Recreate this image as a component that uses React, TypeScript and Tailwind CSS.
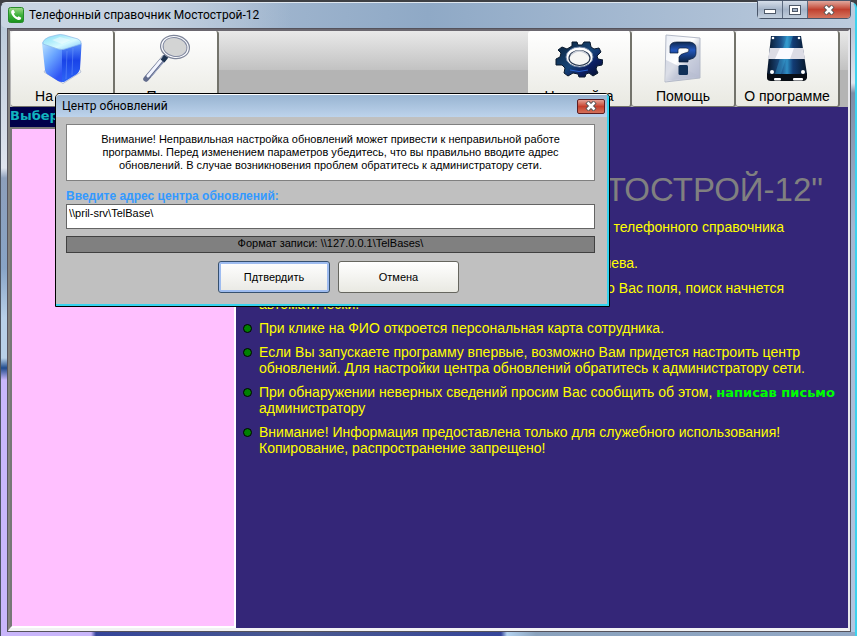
import type { ReactNode } from "react";

const sans = "font-['Liberation_Sans',Arial,sans-serif]";
const caption = "font-['Roboto','Segoe_UI',sans-serif]";

function PhoneLogo() {
  return (
    <svg viewBox="0 0 16 16" className="size-4" aria-hidden="true">
      <defs>
        <linearGradient id="phone" x2="0" y2="1">
          <stop stopColor="#a5dc8e" />
          <stop offset=".5" stopColor="#3fb13b" />
          <stop offset="1" stopColor="#18921c" />
        </linearGradient>
      </defs>
      <rect x=".5" y=".5" width="15" height="15" rx="2" fill="url(#phone)" stroke="#278c2b" />
      <path d="M4 3.2 5.5 2.8 7 5.5 5.8 6.7Q7 9.3 9.4 10.3L10.6 9.2 13.3 10.7 12.8 12.3Q11.6 13.5 9.5 12.7 4.7 10.9 3.2 6 2.8 4.2 4 3.2Z" fill="#fff" />
    </svg>
  );
}

function CubeIcon() {
  return (
    <svg viewBox="0 0 48 52" className="h-13 w-12" aria-hidden="true">
      <defs>
        <linearGradient id="cubeL" x2=".6" y2="1">
          <stop stopColor="#bfe6ff" />
          <stop offset=".5" stopColor="#6aa5ff" />
          <stop offset="1" stopColor="#2f55f5" />
        </linearGradient>
        <linearGradient id="cubeR" x2="0" y2="1">
          <stop stopColor="#5f97fb" />
          <stop offset=".45" stopColor="#1943e8" />
          <stop offset="1" stopColor="#2e66f6" />
        </linearGradient>
        <linearGradient id="cubeT" x2="1" y2="1">
          <stop stopColor="#7fdcf5" />
          <stop offset=".6" stopColor="#d6faff" />
          <stop offset="1" stopColor="#7ac6fa" />
        </linearGradient>
      </defs>
      <path d="M6 39 25 50.500 43 39 41 35 8 36Z" fill="#eef2fb" stroke="#b9c2d8" />
      <path d="M4 10Q4 8 7 9L24 15V49Q22 49 20 48L9 41Q7 39 7 37Z" fill="url(#cubeL)" />
      <path d="M24 15 41 10Q44 9 43.500 12L42 36Q41 39 39 41L26 49 24 49Z" fill="url(#cubeR)" />
      <path d="M5 9Q6 6 11 4L19 2Q22 1 26 2L40 6Q44 8 43 11L27 16Q24 17 20 16L5 11Z" fill="url(#cubeT)" stroke="#8cb8e8" strokeWidth=".7" />
      <path d="M14 7 22 4 33 7 24 11Z" fill="#fff" opacity=".45" />
      <path d="M29 18 28 46M35 15 34 42" stroke="#7fa9ff" strokeWidth="1" opacity=".4" />
    </svg>
  );
}

function MagnifierIcon() {
  return (
    <svg viewBox="0 0 50 52" className="h-13 w-[50px]" aria-hidden="true">
      <path d="M23 25 5 46" stroke="#626c8c" strokeWidth="5.500" strokeLinecap="round" />
      <path d="M22 25 7 43" stroke="#f2f5ff" strokeWidth="3" strokeLinecap="round" />
      <path d="M24 27 10 44" stroke="#9fa9c8" strokeWidth="1" />
      <path d="M25.500 23 21.500 28" stroke="#1d3350" strokeWidth="5" />
      <ellipse cx="34" cy="14" rx="14.500" ry="11.500" transform="rotate(10 34 14)" fill="#fbfcff" stroke="#7d8498" strokeWidth="1.200" />
      <ellipse cx="34" cy="14" rx="12" ry="9.500" transform="rotate(10 34 14)" fill="#d3d4d4" stroke="#8088a0" />
    </svg>
  );
}

function GearIcon() {
  return (
    <svg viewBox="0 0 48 52" className="h-13 w-12" aria-hidden="true">
      <defs>
        <linearGradient id="gear" x2="1" y2="1">
          <stop stopColor="#0a2036" />
          <stop offset=".5" stopColor="#174578" />
          <stop offset=".7" stopColor="#0c1f62" />
          <stop offset="1" stopColor="#050f24" />
        </linearGradient>
      </defs>
      <path d="M17 9H22L23 12H27L29 9H35L36 14 39 16 44 15 46 19 42 23 43 26 48 27 47 32 42 33 41 36 43 40 38 43 34 40 31 41 30 44H24L23 41 18 40 13 43 9 40 10 35 7 32 1 32V26L5 24 6 20 3 17 7 14 12 16 17 13Z" fill="url(#gear)" stroke="#09192d" strokeLinejoin="round" />
      <ellipse cx="24.500" cy="24" rx="13.500" ry="10" fill="#fff" stroke="#6e83a3" />
      <ellipse cx="24.500" cy="25" rx="10.500" ry="7.500" fill="#f6f6f4" stroke="#26364f" strokeWidth="1.200" />
      <path d="M16 22Q24 14 33 22" stroke="#c7ccd6" strokeWidth="1.500" fill="none" />
      <path d="M15 37Q24 40 33 37" stroke="#2761cf" strokeWidth="1" fill="none" />
    </svg>
  );
}

function HelpIcon() {
  return (
    <svg viewBox="0 0 40 52" className="h-13 w-10" aria-hidden="true">
      <defs>
        <linearGradient id="sheet" x2="1" y2="1">
          <stop stopColor="#e9edf5" />
          <stop offset=".45" stopColor="#fff" />
          <stop offset=".6" stopColor="#cbd0de" />
          <stop offset="1" stopColor="#b2b8cf" />
        </linearGradient>
        <linearGradient id="mark" x2="0" y2="1">
          <stop stopColor="#0d2850" />
          <stop offset=".4" stopColor="#2357bd" />
          <stop offset="1" stopColor="#0c2344" />
        </linearGradient>
      </defs>
      <path d="M3 2 37 5V45L2 49Z" fill="url(#sheet)" stroke="#b4bac8" />
      <path d="M3 27 36 43 3 48Z" fill="#b8bed0" opacity=".5" />
      <path d="M7 20V13Q8 9 14 9H27Q33 10 33 15V20Q33 25 28 26L25 27V29H16V24Q17 21 22 20 26 20 26 17 26 15 23 15H17Q15 15 15 17V20Z" fill="url(#mark)" stroke="#0a1d3e" strokeWidth=".7" />
      <rect x="15.500" y="32" width="9.500" height="10" rx="1.500" fill="#103058" />
    </svg>
  );
}

function DriveIcon() {
  return (
    <svg viewBox="0 0 44 52" className="h-13 w-11" aria-hidden="true">
      <defs>
        <linearGradient id="drive" x2="1">
          <stop stopColor="#061326" />
          <stop offset=".35" stopColor="#1e5189" />
          <stop offset=".5" stopColor="#2f8fc4" />
          <stop offset=".65" stopColor="#123c75" />
          <stop offset="1" stopColor="#081728" />
        </linearGradient>
      </defs>
      <path d="M2 40 42 40V45Q41 48 38 48H6Q2 48 2 45Z" fill="#080d14" />
      <path d="M6 3H36L42 41H2Z" fill="url(#drive)" />
      <path d="M22 3H28L16 41H10Z" fill="#43c0ed" opacity=".3" />
      <path d="M5 15H38L40 26H3Z" fill="#dcdce5" />
      <path d="M15 15H29L25 26H10Z" fill="#fafaff" />
      <g fill="#fff">
        <circle cx="8" cy="5" r="1.300" />
        <circle cx="34" cy="5" r="1.300" />
        <circle cx="7" cy="39" r="2" />
        <circle cx="38" cy="39" r="2" />
        <rect x="9" y="45" width="7" height="2.500" rx="1" />
        <rect x="28" y="45" width="10" height="2.500" rx="1" />
      </g>
    </svg>
  );
}

function CloseMark() {
  return (
    <svg viewBox="0 0 12 10" className="h-[10px] w-3" aria-hidden="true">
      <path d="M2 1 10 9M10 1 2 9" stroke="#555" strokeWidth="4.500" />
      <path d="M2.500 1.500 9.500 8.500M9.500 1.500 2.500 8.500" stroke="#fff" strokeWidth="2.500" />
    </svg>
  );
}

function ToolButton({ icon, label }: { icon: ReactNode; label: string }) {
  return (
    <button
      type="button"
      className="flex h-[76px] w-[104px] shrink-0 flex-col items-center rounded-[3px] border-r-2 border-b border-[#73736b] bg-gradient-to-b from-white via-[#f4f4f1] to-[#e9e9e2] pt-[2px] text-[14px] leading-4 text-black"
    >
      {icon}
      <span className="mt-[3px] whitespace-nowrap">{label}</span>
    </button>
  );
}

function Item({ children, className = "mb-2" }: { children: ReactNode; className?: string }) {
  return (
    <li className={`flex gap-[7px] ${className}`}>
      <span className="mt-1 size-[9px] shrink-0 rounded-full border border-black bg-[#008000]" />
      <div className="whitespace-nowrap">{children}</div>
    </li>
  );
}

function UpdateDialog() {
  return (
    <section
      role="dialog"
      aria-labelledby="dialog-title"
      className="absolute top-[93px] left-[55px] w-[555px] rounded-t-[5px] border border-black bg-[#c0c0c0] text-[11px] leading-[13px] text-black"
    >
      <div className="rounded-t-[4px] border-r-2 border-b-2 border-t border-r-[#35d3ee] border-b-[#35d3ee] border-t-white">
        <header className={`flex h-[22px] items-center justify-between rounded-tl-[4px] bg-gradient-to-b from-[#98b4d1] to-[#bdd3ec] pr-[2px] pl-[6px] text-[12px] ${caption}`}>
          <h2 id="dialog-title">Центр обновлений</h2>
          <button type="button" aria-label="Закрыть" className="flex h-[15px] w-7 items-center justify-center rounded-[2px] border border-[#5b1d22] bg-gradient-to-b from-[#e4a195] via-[#c5402c] to-[#d3705a]">
            <CloseMark />
          </button>
        </header>
        <form className="pt-[7px] pr-[12px] pb-[11px] pl-[10px]" onSubmit={(e) => e.preventDefault()}>
          <p className="flex h-[57px] items-center justify-center border border-[#808080] bg-white text-center">
            <span>
              Внимание! Неправильная настройка обновлений может привести к неправильной работе
              <br />
              программы. Перед изменением параметров убедитесь, что вы правильно вводите адрес
              <br />
              обновлений. В случае возникновения проблем обратитесь к администратору сети.
            </span>
          </p>
          <label htmlFor="address" className="mt-[7px] block text-[12px] leading-4 font-bold text-[#3399ff]">
            Введите адрес центра обновлений:
          </label>
          <input
            id="address"
            type="text"
            defaultValue="\\pril-srv\TelBase\"
            className="block h-[25px] w-full border border-[#646464] bg-white pr-1 pb-2 pl-[2px] outline-none"
          />
          <p className="mt-[7px] h-[17px] border border-[#404040] bg-[#808080] text-center">
            {"Формат записи: \\\\127.0.0.1\\TelBases\\"}
          </p>
          <div className="mt-2 flex justify-center gap-2 pl-4">
            <button type="submit" className="h-8 w-[112px] rounded-[3px] border border-[#36506f] bg-gradient-to-b from-white to-[#e9e9e4] shadow-[inset_0_0_0_2px_#9ebcf0]">
              Пдтвердить
            </button>
            <button type="button" className="h-8 w-[121px] rounded-[3px] border border-[#66665f] bg-gradient-to-b from-white to-[#e9e9e2]">
              Отмена
            </button>
          </div>
        </form>
      </div>
    </section>
  );
}

export default function App() {
  return (
    <div className={`relative flex min-h-screen flex-col bg-[#3e4044] pt-[2px] ${sans}`}>
      <div className="flex flex-1 flex-col rounded-t-[6px] border-t border-r-2 border-l border-t-[#dfe7ef] border-r-[#3bd2ee] border-l-[#4a5260] bg-gradient-to-r from-[#b9c8da] via-[#8fa9c6] to-[#bccbdd]">
        <header className="flex h-[25px] justify-between">
          <div className={`flex items-center gap-[5px] rounded-l-[5px] bg-gradient-to-r from-[#c9d5e3] via-[#c5d2e0] to-transparent pr-8 pb-[2px] pl-[7px] text-[12px] text-black ${caption}`}>
            <PhoneLogo />
            <h1>Телефонный справочник Мостострой-12</h1>
          </div>
          <div className="-mt-[3px] mr-1 flex h-[19px] rounded-b-[4px] border border-[#49566a]">
            <button type="button" aria-label="Свернуть" className="flex w-[25px] items-center justify-center border-r border-[#5c6b80] bg-gradient-to-b from-[#d6dee9] via-[#a5b4c8] to-[#c2cfdd]">
              <span className="mt-1 h-[5px] w-3 border border-[#4e5969] bg-white" />
            </button>
            <button type="button" aria-label="Развернуть" className="flex w-[25px] items-center justify-center border-r border-[#5c6b80] bg-gradient-to-b from-[#d6dee9] via-[#a5b4c8] to-[#c2cfdd]">
              <span className="flex h-[10px] w-3 items-center justify-center border border-[#4e5969] bg-white">
                <span className="h-1 w-[6px] border border-[#4e5969] bg-[#a5b4c8]" />
              </span>
            </button>
            <button type="button" aria-label="Закрыть" className="flex w-[42px] items-center justify-center rounded-br-[3px] bg-gradient-to-b from-[#dfa79d] via-[#c0402f] to-[#d4745f]">
              <CloseMark />
            </button>
          </div>
        </header>

        <div className="flex flex-1 bg-[linear-gradient(to_bottom,#bccbda_0,#dfe4ee_140px,#8d9fbb_150px,#88a4c6_240px,#b8d0e8_290px,#b8d0e8_330px,#1f4a8c_340px,#c9b6fb_352px)] pl-[6px]">
          <div className="flex flex-1 flex-col bg-[linear-gradient(to_bottom,#bac8d9_0,#dfe6ef_55px,#7e8da6_65px,#a5b8d2_200px,#b3c6e0_100%)] pr-1">
            <main className="flex flex-1 flex-col border-t-[3px] border-r-[3px] border-b-[4px] border-l-[3px] border-t-[#6b6870] border-r-[#e8e8ec] border-b-[#f2f2f4] border-l-[#84827e] outline outline-1 -outline-offset-1 outline-[#55535c]">
              <nav className="flex justify-between bg-[linear-gradient(to_bottom,#e9e9e9_0,#c2c2c2_51%,#b4b4b4_52%)] pr-2 pl-px">
                <div className="flex">
                  <ToolButton icon={<CubeIcon />} label="На глав." />
                  <ToolButton icon={<MagnifierIcon />} label="Поиск" />
                </div>
                <div className="flex">
                  <ToolButton icon={<GearIcon />} label="Настройка" />
                  <ToolButton icon={<HelpIcon />} label="Помощь" />
                  <ToolButton icon={<DriveIcon />} label="О программе" />
                </div>
              </nav>
              <div className="flex flex-1">
                <aside className="flex w-[226px] shrink-0 flex-col bg-[#00004a]">
                  <h2 className="h-5 pt-px font-['DejaVu_Sans',Verdana,sans-serif] text-[13px] leading-4 font-bold text-[#12b4bf]">Выберите отдел</h2>
                  <div className="flex-1 border-2 border-t-[#777] border-r-white border-b-white border-l-[#777] bg-[#ffc0ff]" />
                </aside>
                <article className="flex-1 overflow-hidden bg-[#342678] pt-[63px] pl-[7px] text-[14px] leading-4 text-[#ffff00]">
                  <h2 className="pr-[25px] text-right text-[33px] leading-10 whitespace-nowrap text-[#808080]">"МОСТОСТРОЙ-12"</h2>
                  <ul className="mt-[9px]">
                    <Item className="mb-5">
                      <p className="w-[525px] text-right">Вас приветствует программа телефонного справочника</p>
                    </Item>
                    <Item className="mb-[9px]">
                      <p className="w-[379px] text-right">Разработчик программы: Ткачева.</p>
                    </Item>
                    <Item>
                      <p className="w-[525px] text-right">Начните ввод в любое из интересующего Вас поля, поиск начнется</p>
                      <p>автоматически.</p>
                    </Item>
                    <Item>При клике на ФИО откроется персональная карта сотрудника.</Item>
                    <Item>
                      Если Вы запускаете программу впервые, возможно Вам придется настроить центр
                      <br />
                      обновлений. Для настройки центра обновлений обратитесь к администратору сети.
                    </Item>
                    <Item>
                      При обнаружении неверных сведений просим Вас сообщить об этом,{" "}
                      <a href="#mail" className="font-['DejaVu_Sans',Verdana,sans-serif] text-[13px] leading-none font-bold text-[#00ff00]">
                        написав письмо
                      </a>
                      <br />
                      администратору
                    </Item>
                    <Item>
                      Внимание! Информация предоставлена только для служебного использования!
                      <br />
                      Копирование, распространение запрещено!
                    </Item>
                  </ul>
                </article>
              </div>
            </main>
          </div>
        </div>
        <footer className="h-1 bg-[linear-gradient(to_right,#c9b6fb_0,#c9b6fb_90px,#35459a_95px,#4a5a90_300px,#35459a_500px,#b3d2f0_506px,#8aa2bd_535px,#93a9c6_100%)]" />
      </div>
      <UpdateDialog />
    </div>
  );
}
